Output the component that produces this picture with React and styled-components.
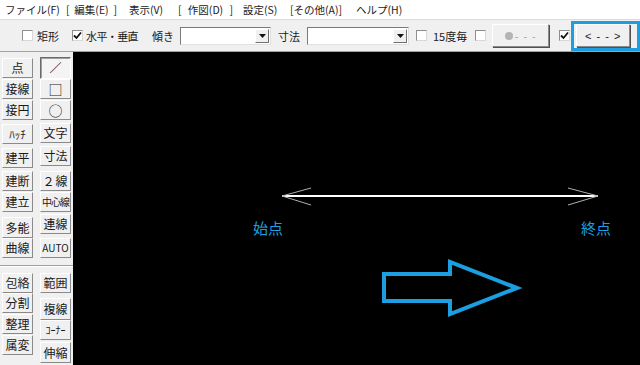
import React from 'react';
import styled, { createGlobalStyle, css } from 'styled-components';

const GlobalStyle = createGlobalStyle`
  html, body {
    margin: 0;
    padding: 0;
    width: 640px;
    height: 365px;
    overflow: hidden;
    background: #f0f0f0;
  }
  #root {
    width: 640px;
    height: 365px;
  }
  * {
    box-sizing: border-box;
  }
`;

const JP = `"Noto Sans CJK JP", "Noto Sans", sans-serif`;
const BLUE = '#1c9fe0';

const Window = styled.div`
  width: 640px;
  height: 365px;
  display: flex;
  flex-direction: column;
  font-family: ${JP};
  color: #1a1a1a;
  overflow: hidden;
`;

const MenuBar = styled.div`
  height: 20px;
  background: #ffffff;
  display: flex;
  align-items: center;
  padding-left: 5px;
  font-size: 10.5px;
  border-bottom: 1px solid #dcdcdc;
`;

const MenuItem = styled.span`
  width: ${(p) => p.$w}px;
  margin-left: ${(p) => p.$gap || 0}px;
  white-space: nowrap;
  display: flex;
  justify-content: space-between;
`;

const ToolBar = styled.div`
  height: 32px;
  background: #f0f0f0;
  display: flex;
  align-items: center;
  padding-left: 22px;
  font-size: 11px;
  border-bottom: 1px solid #a0a0a0;
  position: relative;
`;

const Box = styled.span`
  width: 11px;
  height: 11px;
  margin-left: ${(p) => p.$gap || 0}px;
  background: #ffffff;
  border: 1px solid #8e8e8e;
  border-right-color: #d8d8d8;
  border-bottom-color: #d8d8d8;
  display: inline-flex;
  align-items: center;
  justify-content: center;
  flex: none;
`;

const Label = styled.span`
  margin-left: ${(p) => p.$gap || 0}px;
  white-space: nowrap;
  letter-spacing: ${(p) => p.$ls || 0}px;
`;

const Combo = styled.div`
  width: ${(p) => p.$w}px;
  height: 18px;
  margin-left: ${(p) => p.$gap || 0}px;
  background: #ffffff;
  border: 1px solid #7a7a7a;
  border-right-color: #e0e0e0;
  border-bottom-color: #e0e0e0;
  display: flex;
  justify-content: flex-end;
  align-items: stretch;
  padding: 1px;
  flex: none;
`;

const ComboArrow = styled.span`
  width: 14px;
  background: #f0f0f0;
  border: 1px solid #ffffff;
  border-right-color: #707070;
  border-bottom-color: #707070;
  display: flex;
  align-items: center;
  justify-content: center;
`;

const TBButton = styled.div`
  width: ${(p) => p.$w}px;
  height: 23px;
  margin-left: ${(p) => p.$gap || 0}px;
  background: #f0f0f0;
  border: 1px solid #ffffff;
  border-right-color: #8a8a8a;
  border-bottom-color: #8a8a8a;
  box-shadow: 1px 1px 0 #505050;
  display: flex;
  align-items: center;
  justify-content: center;
  font-family: "Liberation Sans", ${JP};
  font-size: 11px;
  letter-spacing: 1px;
  flex: none;
  color: ${(p) => (p.$disabled ? '#a8a8a8' : '#1a1a1a')};
`;

const Dot = styled.span`
  width: 8px;
  height: 8px;
  border-radius: 50%;
  background: #b4b4b4;
  margin-right: 2px;
`;

const Highlight = styled.div`
  position: absolute;
  left: 571px;
  top: 1px;
  width: 69px;
  height: 30px;
  border: 3px solid ${BLUE};
  pointer-events: none;
`;

const Body = styled.div`
  flex: 1;
  display: flex;
  min-height: 0;
`;

const SidePanel = styled.div`
  width: 73px;
  background: #f0f0f0;
  display: flex;
  padding-left: 2px;
  position: relative;
`;

const Column = styled.div`
  width: ${(p) => p.$w}px;
  margin-left: ${(p) => p.$gap || 0}px;
  display: flex;
  flex-direction: column;
`;

const pressed = css`
  border-color: #6a6a6a #ffffff #ffffff #6a6a6a;
  box-shadow: inset 1px 1px 0 #a0a0a0;
  background: #f4f4f4;
`;

const ToolButton = styled.div`
  height: ${(p) => p.$h || 20}px;
  margin-top: ${(p) => p.$gap || 0}px;
  background: #f0f0f0;
  border: 1px solid #ffffff;
  border-right-color: #8a8a8a;
  border-bottom-color: #8a8a8a;
  display: flex;
  align-items: center;
  justify-content: center;
  font-size: ${(p) => p.$fs || 12}px;
  line-height: 1;
  white-space: nowrap;
  letter-spacing: ${(p) => p.$ls || 0}px;
  ${(p) => p.$pressed && pressed}
`;

const Separator = styled.div`
  position: absolute;
  left: 0;
  right: 0;
  top: 213px;
  height: 2px;
  border-top: 1px solid #a0a0a0;
  border-bottom: 1px solid #ffffff;
`;

const Canvas = styled.div`
  flex: 1;
  background: #000000;
  position: relative;
`;

const Drawing = styled.svg`
  position: absolute;
  left: 0;
  top: 0;
`;

const PointLabel = styled.span`
  position: absolute;
  left: ${(p) => p.$x}px;
  top: ${(p) => p.$y}px;
  color: ${BLUE};
  font-size: 15px;
  line-height: 1;
`;

const Check = () => (
  <svg width="9" height="9" viewBox="0 0 9 9">
    <path d="M1 4.5 L3.5 7 L8 1.5" fill="none" stroke="#111" strokeWidth="1.8" />
  </svg>
);

const DownTri = () => (
  <svg width="7" height="4" viewBox="0 0 7 4">
    <path d="M0 0 H7 L3.5 4 Z" fill="#111" />
  </svg>
);

const menus = [
  { parts: ['ファイル(F)'], w: 50, g: 0 },
  { parts: ['[', '編集(E)', ']'], w: 51, g: 11 },
  { parts: ['表示(V)'], w: 37, g: 12 },
  { parts: ['[', '作図(D)', ']'], w: 55, g: 12 },
  { parts: ['設定(S)'], w: 36, g: 10 },
  { parts: ['[その他(A)]'], w: 55, g: 11 },
  { parts: ['ヘルプ(H)'], w: 45, g: 11 },
];

const col1 = [
  { t: '点', g: 6 },
  { t: '接線', g: 1 },
  { t: '接円', g: 1 },
  { t: 'ﾊｯﾁ', g: 4, fs: 11 },
  { t: '建平', g: 4 },
  { t: '建断', g: 3 },
  { t: '建立', g: 1 },
  { t: '多能', g: 5, h: 21 },
  { t: '曲線', g: 0 },
  { t: '包絡', g: 15 },
  { t: '分割', g: 0 },
  { t: '整理', g: 1 },
  { t: '属変', g: 1 },
];

const col2 = [
  { t: '／', g: 5, h: 22, pressed: true },
  { t: '□', g: 0, fs: 14 },
  { t: '○', g: 1, fs: 14 },
  { t: '文字', g: 3 },
  { t: '寸法', g: 3 },
  { t: '２線', g: 5, ls: 1 },
  { t: '中心線', g: 1, fs: 10, ls: -1 },
  { t: '連線', g: 2 },
  { t: 'AUTO', g: 4, fs: 10 },
  { t: '範囲', g: 15 },
  { t: '複線', g: 5, h: 22 },
  { t: 'ｺｰﾅｰ', g: 0, fs: 10 },
  { t: '伸縮', g: 2, h: 21 },
];

export default function App() {
  return (
    <Window>
      <GlobalStyle />
      <MenuBar>
        {menus.map((m) => (
          <MenuItem key={m.parts.join('')} $w={m.w} $gap={m.g}>
            {m.parts.map((p) => (
              <span key={p}>{p}</span>
            ))}
          </MenuItem>
        ))}
      </MenuBar>
      <ToolBar>
        <Box />
        <Label $gap={4}>矩形</Label>
        <Box $gap={13}>
          <Check />
        </Box>
        <Label $gap={3} $ls={-0.6}>
          水平・垂直
        </Label>
        <Label $gap={14}>傾き</Label>
        <Combo $w={91} $gap={6}>
          <ComboArrow>
            <DownTri />
          </ComboArrow>
        </Combo>
        <Label $gap={7}>寸法</Label>
        <Combo $w={102} $gap={7}>
          <ComboArrow>
            <DownTri />
          </ComboArrow>
        </Combo>
        <Box $gap={7} />
        <Label $gap={6}>15度毎</Label>
        <Box $gap={8} />
        <TBButton $w={57} $gap={6} $disabled>
          <Dot />- - -
        </TBButton>
        <Box $gap={10}>
          <Check />
        </Box>
        <TBButton $w={54} $gap={6}>
          {'< - - >'}
        </TBButton>
        <Highlight />
      </ToolBar>
      <Body>
        <SidePanel>
          <Column $w={31}>
            {col1.map((b) => (
              <ToolButton key={b.t} $gap={b.g} $h={b.h} $fs={b.fs}>
                {b.t}
              </ToolButton>
            ))}
          </Column>
          <Column $w={31} $gap={7}>
            {col2.map((b) => (
              <ToolButton
                key={b.t}
                $gap={b.g}
                $h={b.h}
                $fs={b.fs}
                $ls={b.ls}
                $pressed={b.pressed}
              >
                {b.t}
              </ToolButton>
            ))}
          </Column>
          <Separator />
        </SidePanel>
        <Canvas>
          <Drawing width="567" height="313" viewBox="0 0 567 313">
            <line x1="209" y1="144" x2="525" y2="144" stroke="#ffffff" strokeWidth="2" />
            <line x1="209" y1="144" x2="238" y2="136" stroke="#b0b0b0" strokeWidth="1" />
            <line x1="209" y1="144" x2="238" y2="153" stroke="#b0b0b0" strokeWidth="1" />
            <line x1="525" y1="144" x2="495" y2="136" stroke="#b0b0b0" strokeWidth="1" />
            <line x1="525" y1="144" x2="495" y2="153" stroke="#b0b0b0" strokeWidth="1" />
            <polygon
              points="311,222 377,222 377,210 444,236 377,262 377,249 311,249"
              fill="none"
              stroke={BLUE}
              strokeWidth="4"
              strokeLinejoin="miter"
            />
          </Drawing>
          <PointLabel $x={180} $y={168}>
            始点
          </PointLabel>
          <PointLabel $x={508} $y={168}>
            終点
          </PointLabel>
        </Canvas>
      </Body>
    </Window>
  );
}
